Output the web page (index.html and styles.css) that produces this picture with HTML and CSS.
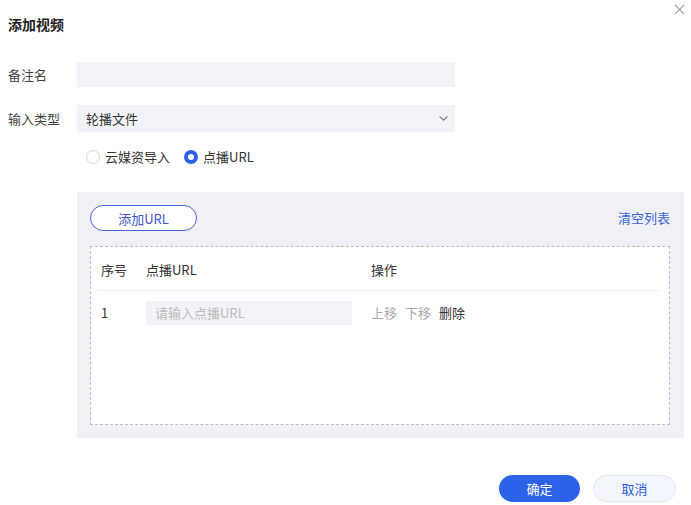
FILE: index.html
```html
<!DOCTYPE html>
<html lang="zh-CN">
<head>
    <meta charset="UTF-8">
    <title>添加视频</title>
    <link rel="stylesheet" href="styles.css">
</head>
<body>
    <div class="dialog">
        <div class="dialog-title">添加视频</div>
        <button class="close-btn" title="关闭">
            <svg viewBox="0 0 12 12" fill="none">
                <path d="M1 1L11 11M11 1L1 11" stroke="currentColor" stroke-width="1.2"/>
            </svg>
        </button>

        <div class="form-row row-name">
            <label class="form-label">备注名</label>
            <input class="form-input" type="text">
        </div>

        <div class="form-row row-type">
            <label class="form-label">输入类型</label>
            <div class="form-select">
                <span>轮播文件</span>
                <svg viewBox="0 0 12 8" fill="none">
                    <path d="M1.5 1.5L6 6L10.5 1.5" stroke="currentColor" stroke-width="1.3"/>
                </svg>
            </div>
        </div>

        <div class="radio-group">
            <label class="radio"><span class="radio-dot"></span>云媒资导入</label>
            <label class="radio checked"><span class="radio-dot"></span>点播URL</label>
        </div>

        <div class="url-panel">
            <div class="panel-toolbar">
                <button class="outline-btn">添加URL</button>
                <a class="link" href="#">清空列表</a>
            </div>
            <div class="url-box">
                <div class="url-row url-head">
                    <div class="col-idx">序号</div>
                    <div class="col-url">点播URL</div>
                    <div class="col-op">操作</div>
                </div>
                <div class="url-row">
                    <div class="col-idx">1</div>
                    <div class="col-url"><input class="url-input" type="text" placeholder="请输入点播URL"></div>
                    <div class="col-op">
                        <span class="op disabled">上移</span>
                        <span class="op disabled">下移</span>
                        <span class="op">删除</span>
                    </div>
                </div>
            </div>
        </div>

        <div class="dialog-footer">
            <button class="btn btn-primary">确定</button>
            <button class="btn btn-default">取消</button>
        </div>
    </div>
</body>
</html>
```

FILE: styles.css
```css
:root {
    --primary-color: #2c62e8;
    --link-color: #3a62d8;
    --text-color: #333;
    --muted-color: #aaa;
    --field-bg: #f2f3f8;
    --panel-bg: #f0f1f7;
}

* {
    margin: 0;
    padding: 0;
    box-sizing: border-box;
}

body {
    font-family: "Noto Sans CJK SC", "Noto Sans", sans-serif;
    font-size: 13px;
    line-height: 20px;
    color: var(--text-color);
    background-color: #fff;
}

.dialog {
    position: relative;
    width: 691px;
    height: 505px;
    padding: 14px 7px 0 8px;
}

.dialog-title {
    font-size: 14px;
    font-weight: bold;
    color: #222;
    height: 20px;
}

.close-btn {
    position: absolute;
    top: 4px;
    right: 6px;
    width: 11px;
    height: 11px;
    background: none;
    border: none;
    color: #999;
    cursor: pointer;
}

.close-btn svg {
    display: block;
    width: 11px;
    height: 11px;
}

.form-row {
    display: flex;
    align-items: center;
}

.row-name {
    margin-top: 28px;
}

.row-type {
    margin-top: 18px;
}

.form-label {
    width: 69px;
    color: #444;
}

.form-input {
    width: 378px;
    height: 25px;
    border: none;
    background-color: var(--field-bg);
    outline: none;
}

.form-select {
    width: 378px;
    height: 27px;
    display: flex;
    align-items: center;
    justify-content: space-between;
    padding: 0 6px 0 9px;
    background-color: var(--field-bg);
    color: #333;
}

.form-select svg {
    width: 11px;
    height: 7px;
    color: #777;
}

.radio-group {
    display: flex;
    gap: 14px;
    margin: 15px 0 0 78px;
    height: 20px;
}

.radio {
    display: flex;
    align-items: center;
    gap: 5px;
    color: #333;
}

.radio-dot {
    width: 14px;
    height: 14px;
    border: 1px solid #d3d6dd;
    border-radius: 50%;
    background-color: #fff;
}

.radio.checked .radio-dot {
    border: 4px solid var(--primary-color);
}

.url-panel {
    margin: 25px 0 0 69px;
    width: 607px;
    height: 246px;
    padding: 13px 14px 13px 13px;
    background-color: var(--panel-bg);
}

.panel-toolbar {
    display: flex;
    align-items: center;
    justify-content: space-between;
    height: 26px;
}

.outline-btn {
    width: 107px;
    height: 26px;
    border: 1px solid #4b64d4;
    border-radius: 13px;
    background-color: #fff;
    color: #3d56c8;
    font-family: inherit;
    font-size: 13px;
    cursor: pointer;
}

.link {
    color: var(--link-color);
    text-decoration: none;
}

.url-box {
    margin-top: 15px;
    height: 179px;
    border: 1px dashed #b9bcc4;
    background-color: #fff;
    padding: 0 10px 0 7px;
}

.url-row {
    display: flex;
    align-items: center;
    padding-left: 3px;
}

.url-head {
    height: 44px;
    padding-top: 2px;
    border-bottom: 1px solid #eef0f4;
}

.url-row:not(.url-head) {
    height: 44px;
    padding-bottom: 1px;
}

.col-idx {
    width: 45px;
}

.col-url {
    width: 225px;
}

.col-op {
    display: flex;
    gap: 8px;
}

.url-input {
    width: 206px;
    height: 24px;
    border: none;
    outline: none;
    padding: 0 9px;
    background-color: var(--field-bg);
    font-family: inherit;
    font-size: 13px;
}

.url-input::placeholder {
    color: #bbb;
}

.op {
    color: #333;
    cursor: pointer;
}

.op.disabled {
    color: var(--muted-color);
}

.dialog-footer {
    display: flex;
    justify-content: flex-end;
    gap: 13px;
    margin-top: 37px;
    padding-right: 8px;
}

.btn {
    height: 27px;
    border-radius: 14px;
    font-family: inherit;
    font-size: 13px;
    cursor: pointer;
}

.btn-primary {
    width: 81px;
    border: none;
    background-color: var(--primary-color);
    color: #fff;
}

.btn-default {
    width: 83px;
    border: 1px solid #e0e6f4;
    background-color: #f3f6fc;
    color: #2d5be0;
}
```
